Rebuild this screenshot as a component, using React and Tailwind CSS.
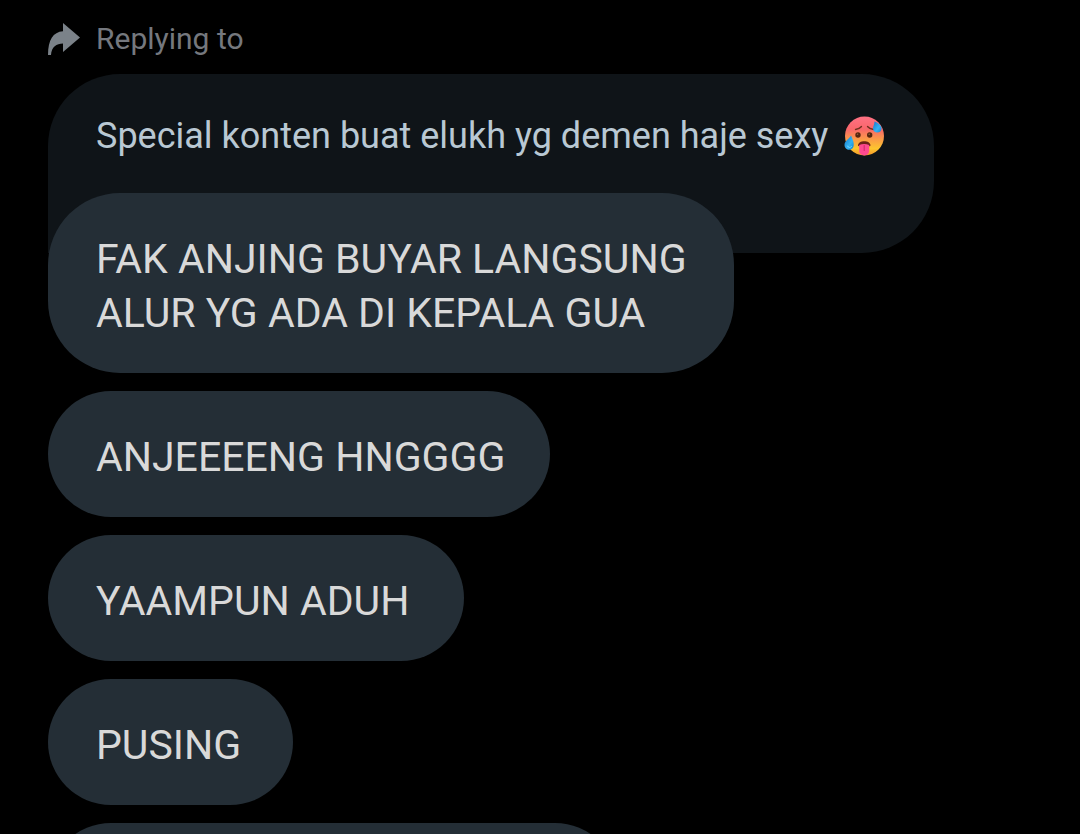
const messages = [
  { text: "FAK ANJING BUYAR LANGSUNG ALUR YG ADA DI KEPALA GUA", width: "w-[686px]" },
  { text: "ANJEEEENG HNGGGG", width: "w-[502px]" },
  { text: "YAAMPUN ADUH", width: "w-[416px]" },
  { text: "PUSING", width: "w-[245px]" },
];

function ReplyIcon() {
  return (
    <svg viewBox="0 0 32 32" className="h-8 w-8 shrink-0" fill="#7b8289" aria-hidden="true">
      <path d="M15 0 L32 14.500 L15 29 V20.500 C8.500 20.500 3.500 24 3 32 H0 C0 16.500 5 9 15 8.200 Z" />
    </svg>
  );
}

function HotFace() {
  return (
    <svg viewBox="0 0 40 40" className="h-10 w-10 shrink-0" role="img" aria-label="Hot face">
      <defs>
        <linearGradient id="skin" x1="0" y1="0" x2="0" y2="1">
          <stop offset="0" stopColor="#ff7284" />
          <stop offset="0.32" stopColor="#f9666b" />
          <stop offset="0.58" stopColor="#fb9a48" />
          <stop offset="0.82" stopColor="#fdc52e" />
          <stop offset="1" stopColor="#f3962a" />
        </linearGradient>
        <linearGradient id="drop" x1="0" y1="0" x2="1" y2="1">
          <stop offset="0" stopColor="#1677c8" />
          <stop offset="0.6" stopColor="#33b2f2" />
          <stop offset="1" stopColor="#1481cf" />
        </linearGradient>
      </defs>
      <circle cx="20.500" cy="20" r="19.500" fill="url(#skin)" />
      <path d="M11.500 13.500 Q15.500 13 17.500 10.500" fill="none" stroke="#70301f" strokeWidth="1.300" strokeLinecap="round" />
      <path d="M23.500 10.500 Q25.500 13 29.500 13.500" fill="none" stroke="#70301f" strokeWidth="1.300" strokeLinecap="round" />
      <circle cx="14" cy="19" r="2.700" fill="#55260f" />
      <circle cx="25.700" cy="19" r="2.700" fill="#55260f" />
      <circle cx="13.500" cy="18.200" r="0.800" fill="#95603c" />
      <circle cx="25.200" cy="18.200" r="0.800" fill="#95603c" />
      <path d="M14 29.500 C14 23.800 26.500 23.800 26.500 29.500 C26.500 31 14 31 14 29.500 Z" fill="#6d2217" />
      <path d="M15.200 29 Q20 27 25.200 29 V34.500 C25.200 41 15.200 41 15.200 34.500 Z" fill="#ff4a90" />
      <path d="M20.200 29.500 V34.500" stroke="#cf2566" strokeWidth="1" strokeLinecap="round" />
      <path d="M30.500 5.500 C34 7 38 9.500 37.500 13 C37 18 29 17.500 29 12.500 C29 10 30.500 8.500 30.500 5.500 Z" fill="url(#drop)" />
      <path d="M7 19.500 C8.500 23 10.500 27 9.500 30.500 C8 35.500 0.500 34.500 0.500 29 C0.500 25 5 23 7 19.500 Z" fill="url(#drop)" />
      <path d="M3.500 30 Q5 33 7.500 30.500" fill="none" stroke="#79d8ff" strokeWidth="1" strokeLinecap="round" />
    </svg>
  );
}

function Bubble({ width, children }) {
  return (
    <div
      className={`${width} max-w-full rounded-[72px] bg-[#242e36] pt-[39px] pr-8 pb-[33px] pl-12 text-[41px] leading-[54px] text-[#d9d9d9]`}
    >
      {children}
    </div>
  );
}

export default function App() {
  return (
    <main className="h-screen overflow-hidden bg-black px-12 pt-[22px] font-[Roboto,sans-serif]">
      <div className="flex items-center gap-4 text-[30px] leading-[34px] text-[#75787e]">
        <ReplyIcon />
        <span>Replying to</span>
      </div>

      <blockquote className="mt-[18px] flex w-[886px] max-w-full items-center justify-between rounded-[72px] rounded-bl-none bg-[#0f1418] pt-[38px] pr-[50px] pb-[93px] pl-12 text-[36px] leading-[48px] text-[#b9c8d3]">
        <p>Special konten buat elukh yg demen haje sexy</p>
        <HotFace />
      </blockquote>

      <div className="-mt-[60px] flex flex-col gap-[18px]">
        {messages.map((message) => (
          <Bubble key={message.text} width={message.width}>
            {message.text}
          </Bubble>
        ))}
        {/* next message, runs past the bottom of the screen */}
        <div className="h-[126px] w-full max-w-[570px] shrink-0 rounded-[72px] bg-[#242e36]" />
      </div>
    </main>
  );
}
